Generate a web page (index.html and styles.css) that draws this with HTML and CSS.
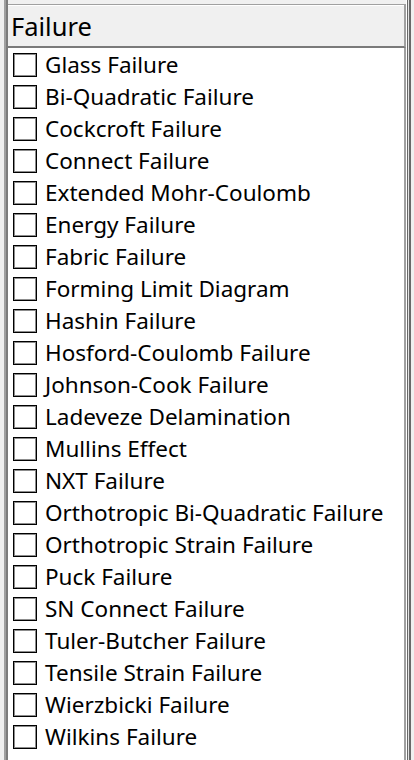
FILE: index.html
```html
<!DOCTYPE html>
<html lang="en">
<head>
<meta charset="utf-8">
<title>Failure</title>
<link rel="stylesheet" href="styles.css">
</head>
<body>
<div class="frame">
  <div class="pane">
    <div class="content">
      <div class="header">Failure</div>
      <ul class="list">
        <li class="item"><span class="box"></span><span class="label">Glass Failure</span></li>
        <li class="item"><span class="box"></span><span class="label">Bi-Quadratic Failure</span></li>
        <li class="item"><span class="box"></span><span class="label">Cockcroft Failure</span></li>
        <li class="item"><span class="box"></span><span class="label">Connect Failure</span></li>
        <li class="item"><span class="box"></span><span class="label">Extended Mohr-Coulomb</span></li>
        <li class="item"><span class="box"></span><span class="label">Energy Failure</span></li>
        <li class="item"><span class="box"></span><span class="label">Fabric Failure</span></li>
        <li class="item"><span class="box"></span><span class="label">Forming Limit Diagram</span></li>
        <li class="item"><span class="box"></span><span class="label">Hashin Failure</span></li>
        <li class="item"><span class="box"></span><span class="label">Hosford-Coulomb Failure</span></li>
        <li class="item"><span class="box"></span><span class="label">Johnson-Cook Failure</span></li>
        <li class="item"><span class="box"></span><span class="label">Ladeveze Delamination</span></li>
        <li class="item"><span class="box"></span><span class="label">Mullins Effect</span></li>
        <li class="item"><span class="box"></span><span class="label">NXT Failure</span></li>
        <li class="item"><span class="box"></span><span class="label">Orthotropic Bi-Quadratic Failure</span></li>
        <li class="item"><span class="box"></span><span class="label">Orthotropic Strain Failure</span></li>
        <li class="item"><span class="box"></span><span class="label">Puck Failure</span></li>
        <li class="item"><span class="box"></span><span class="label">SN Connect Failure</span></li>
        <li class="item"><span class="box"></span><span class="label">Tuler-Butcher Failure</span></li>
        <li class="item"><span class="box"></span><span class="label">Tensile Strain Failure</span></li>
        <li class="item"><span class="box"></span><span class="label">Wierzbicki Failure</span></li>
        <li class="item"><span class="box"></span><span class="label">Wilkins Failure</span></li>
      </ul>
    </div>
  </div>
</div>
</body>
</html>
```
FILE: styles.css
```css
html, body {
  margin: 0;
  padding: 0;
  height: 760px;
  overflow: hidden;
  background: #f0f0f0;
  font-family: "Noto Sans", "Open Sans", sans-serif;
  color: #000;
}

.frame {
  margin: 0 3px 0 4px;
  height: 760px;
  border-left: 2px solid #a0a0a0;
  border-right: 2px solid #696969;
  box-sizing: border-box;
  display: flex;
}

.pane {
  flex: 1;
  display: flex;
  border-left: 2px solid #7c7c7c;
  border-right: 1px solid #e3e3e3;
}

.content {
  flex: 1;
  display: flex;
  flex-direction: column;
  background: #f0f0f0;
  border-right: 1px solid #696969;
  box-shadow: inset -1px 0 0 #fff;
  padding-right: 1px;
}

.header {
  margin-top: 4px;
  height: 41px;
  border-top: 1px solid #a0a0a0;
  border-bottom: 2px solid #7a7a7a;
  border-right: 2px solid #a0a0a0;
  box-shadow: inset 0 1px 0 #fff;
  background: #f0f0f0;
  padding-left: 3px;
  font-size: 25.5px;
  line-height: 43px;
}

.list {
  flex: 1;
  list-style: none;
  margin: 0;
  padding: 1px 0 0 5px;
  background: #fff;
  border-right: 2px solid #a0a0a0;
}

.item {
  height: 32px;
  display: flex;
  align-items: center;
  gap: 8px;
}

.box {
  width: 24px;
  height: 24px;
  box-sizing: border-box;
  border: 1px solid #000;
  box-shadow: inset 0 0 0 1px rgba(0, 0, 0, 0.45);
  background: #fff;
  flex: none;
}

.label {
  font-size: 22.5px;
  line-height: 32px;
  white-space: nowrap;
}
```
